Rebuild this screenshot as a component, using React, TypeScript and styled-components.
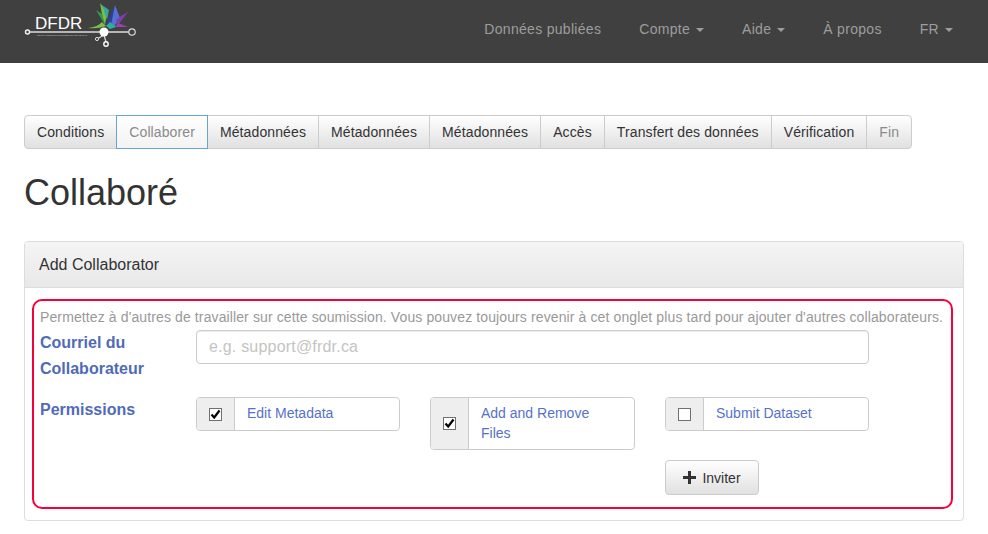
import { createGlobalStyle } from "styled-components";
import styled from "styled-components";

const GlobalStyle = createGlobalStyle`
  html, body {
    margin: 0;
    padding: 0;
    background: #fff;
    font-family: "Liberation Sans", Arial, sans-serif;
    font-size: 14px;
    color: #333;
  }
  * { box-sizing: border-box; }
`;

const Navbar = styled.nav`
  height: 63px;
  background: #404040;
  display: flex;
  justify-content: space-between;
`;

const Logo = styled.div`
  position: relative;
  width: 140px;
  height: 50px;
  margin-left: 24px;
`;

const LogoName = styled.span`
  position: absolute;
  left: 11px;
  top: 14px;
  font-size: 17px;
  line-height: 20px;
  color: #fff;
`;

const LogoTagline = styled.span`
  position: absolute;
  left: 13px;
  top: 33px;
  font-size: 2.2px;
  line-height: 4px;
  white-space: nowrap;
  color: #bbb;
`;

const NavLinks = styled.ul`
  display: flex;
  list-style: none;
  margin: 0;
  padding: 0 16px 0 0;
`;

const NavLink = styled.li`
  padding: 19px 19px;
  font-size: 14px;
  line-height: 20px;
  letter-spacing: 0.3px;
  color: #9d9d9d;
`;

const Caret = styled.span`
  display: inline-block;
  margin-left: 6px;
  vertical-align: middle;
  border-top: 4px solid #9d9d9d;
  border-left: 4px solid transparent;
  border-right: 4px solid transparent;
`;

const Page = styled.main`
  padding: 52px 24px 0;
`;

const Steps = styled.div`
  display: inline-flex;
  height: 34px;
`;

const Step = styled.div<{ $active?: boolean; $muted?: boolean }>`
  height: 34px;
  padding: 6px 12px;
  margin-left: -1px;
  line-height: 20px;
  letter-spacing: 0.11px;
  white-space: nowrap;
  color: ${(p) => (p.$muted ? "#8a8a8a" : "#333")};
  border: 1px solid ${(p) => (p.$active ? "#66a5d8" : "#ccc")};
  position: ${(p) => (p.$active ? "relative" : "static")};
  background: ${(p) =>
    p.$active ? "linear-gradient(to bottom, #fff 0%, #f3f3f3 100%)" : "linear-gradient(to bottom, #fff 0%, #e0e0e0 100%)"};

  &:first-child {
    margin-left: 0;
    border-radius: 4px 0 0 4px;
  }
  &:last-child {
    border-radius: 0 4px 4px 0;
  }
`;

const Title = styled.h1`
  margin: 21px 0 25px;
  font-size: 36px;
  font-weight: 400;
  line-height: 46px;
  color: #333;
`;

const Panel = styled.section`
  width: 940px;
  height: 280px;
  border: 1px solid #ddd;
  border-radius: 4px;
  box-shadow: 0 1px 1px rgba(0, 0, 0, 0.05);
`;

const PanelHeading = styled.div`
  height: 46px;
  padding: 13px 14px;
  font-size: 16px;
  line-height: 19px;
  color: #333;
  background: linear-gradient(to bottom, #f5f5f5 0%, #e8e8e8 100%);
  border-bottom: 1px solid #ddd;
  border-radius: 3px 3px 0 0;
`;

const Highlight = styled.div`
  width: 921px;
  height: 210px;
  margin: 11px 0 0 7px;
  padding: 6px 6px 0;
  border: 2px solid #f5003d;
  border-radius: 10px;
`;

const Intro = styled.p`
  margin: 0 0 3px;
  font-size: 14px;
  line-height: 20px;
  letter-spacing: 0.115px;
  white-space: nowrap;
  color: #999;
`;

const FormRow = styled.div`
  display: flex;
  align-items: flex-start;
`;

const FieldLabel = styled.label`
  flex: 0 0 156px;
  font-size: 16px;
  font-weight: 700;
  line-height: 26px;
  color: #4f6bb8;
`;

const EmailInput = styled.input`
  width: 673px;
  height: 34px;
  padding: 6px 12px;
  font-family: inherit;
  font-size: 14px;
  color: #555;
  border: 1px solid #ccc;
  border-radius: 4px;
  box-shadow: inset 0 1px 1px rgba(0, 0, 0, 0.075);

  &::placeholder {
    color: #c4c4c4;
    opacity: 1;
    font-size: 16px;
    letter-spacing: 0.2px;
  }
`;

const PermissionRow = styled(FormRow)`
  margin-top: 15px;
`;

const PermissionGrid = styled.div`
  display: grid;
  grid-template-columns: 204px 205px 204px;
  column-gap: 30px;
  row-gap: 10px;
  align-items: start;
`;

const InputGroup = styled.div`
  display: flex;
  min-height: 34px;
  border: 1px solid #ccc;
  border-radius: 4px;
`;

const Addon = styled.span`
  flex: 0 0 38px;
  display: flex;
  align-items: center;
  justify-content: center;
  background: #eee;
  border-right: 1px solid #ccc;
  border-radius: 3px 0 0 3px;
`;

const Check = styled.span`
  width: 13px;
  height: 13px;
  display: block;
  background: #fff;
  border: 1px solid #707070;
`;

const PermissionName = styled.span`
  padding: 5px 12px 6px;
  font-size: 14px;
  line-height: 20px;
  color: #5672c8;
`;

const InviteButton = styled.button`
  grid-column: 3;
  justify-self: start;
  width: 94px;
  height: 35px;
  display: flex;
  align-items: center;
  justify-content: center;
  gap: 6px;
  padding: 0;
  font-family: inherit;
  font-size: 14px;
  color: #333;
  border: 1px solid #ccc;
  border-radius: 4px;
  background: linear-gradient(to bottom, #fff 0%, #e0e0e0 100%);
`;

const steps = [
  "Conditions",
  "Collaborer",
  "Métadonnées",
  "Métadonnées",
  "Métadonnées",
  "Accès",
  "Transfert des données",
  "Vérification",
  "Fin",
];

const permissions = [
  { name: "Edit Metadata", checked: true },
  { name: "Add and Remove Files", checked: true },
  { name: "Submit Dataset", checked: false },
];

function LogoArt() {
  return (
    <svg
      width="140"
      height="50"
      viewBox="0 0 140 50"
      style={{ position: "absolute", left: 0, top: 0 }}
    >
      <path d="M64 28 Q74 27 78 22 L82 26 Q74 29 64 28z" fill="#7ac143" />
      <polygon points="72,10 81,25 78,14" fill="#2f9e44" />
      <polygon points="76,3 83,12 81,25 78,14" fill="#7ac143" />
      <polygon points="78,5 85,10 83,20" fill="#35a9a0" />
      <polygon points="83,23 91,5 89,20 86,26" fill="#2c3f9e" />
      <polygon points="91,5 96,18 90,27 87,25" fill="#5470d0" />
      <polygon points="104,12 94,25 92,20 97,16" fill="#7d3fb0" />
      <polygon points="104,27 94,23 91,27" fill="#a040b0" />
      <polygon points="82,26 86,22 92,27 86,29" fill="#2ab0a0" />
      <path d="M4 32 H105" stroke="#ddd" strokeWidth="1.5" />
      <circle cx="3.5" cy="32" r="2" fill="#404040" stroke="#eee" strokeWidth="1.5" />
      <circle cx="108" cy="32" r="3.2" fill="#404040" stroke="#ddd" strokeWidth="1.2" />
      <path d="M80 35 L73 39 M80 35 L82 42" stroke="#ddd" strokeWidth="1.2" />
      <circle cx="80" cy="32" r="4.5" fill="#fff" />
      <circle cx="73" cy="39" r="1.6" fill="#404040" stroke="#ddd" />
      <circle cx="82" cy="44" r="2.2" fill="#404040" stroke="#fff" strokeWidth="1.4" />
    </svg>
  );
}

function Tick() {
  return (
    <svg width="11" height="11" viewBox="0 0 11 11" style={{ display: "block" }}>
      <path d="M1.5 5.5 L4.2 8.5 L9.5 1.5" fill="none" stroke="#000" strokeWidth="2.2" />
    </svg>
  );
}

function Plus() {
  return (
    <svg width="13" height="13" viewBox="0 0 13 13">
      <path d="M5 0h3v5h5v3H8v5H5V8H0V5h5z" fill="#333" />
    </svg>
  );
}

export default function App() {
  return (
    <>
      <GlobalStyle />
      <Navbar>
        <Logo>
          <LogoArt />
          <LogoName>DFDR</LogoName>
          <LogoTagline>DÉPÔT FÉDÉRÉ DE DONNÉES DE RECHERCHE</LogoTagline>
        </Logo>
        <NavLinks>
          <NavLink>Données publiées</NavLink>
          <NavLink>
            Compte<Caret />
          </NavLink>
          <NavLink>
            Aide<Caret />
          </NavLink>
          <NavLink>À propos</NavLink>
          <NavLink>
            FR<Caret />
          </NavLink>
        </NavLinks>
      </Navbar>
      <Page>
        <Steps>
          {steps.map((step, i) => (
            <Step key={i} $active={i === 1} $muted={i === 1 || i === 8}>
              {step}
            </Step>
          ))}
        </Steps>
        <Title>Collaboré</Title>
        <Panel>
          <PanelHeading>Add Collaborator</PanelHeading>
          <Highlight>
            <Intro>
              Permettez à d'autres de travailler sur cette soumission. Vous pouvez toujours
              revenir à cet onglet plus tard pour ajouter d'autres collaborateurs.
            </Intro>
            <FormRow>
              <FieldLabel>
                Courriel du
                <br />
                Collaborateur
              </FieldLabel>
              <EmailInput placeholder="e.g. support@frdr.ca" />
            </FormRow>
            <PermissionRow>
              <FieldLabel>Permissions</FieldLabel>
              <PermissionGrid>
                {permissions.map((perm) => (
                  <InputGroup key={perm.name}>
                    <Addon>
                      <Check>{perm.checked && <Tick />}</Check>
                    </Addon>
                    <PermissionName>{perm.name}</PermissionName>
                  </InputGroup>
                ))}
                <InviteButton>
                  <Plus />
                  Inviter
                </InviteButton>
              </PermissionGrid>
            </PermissionRow>
          </Highlight>
        </Panel>
      </Page>
    </>
  );
}
